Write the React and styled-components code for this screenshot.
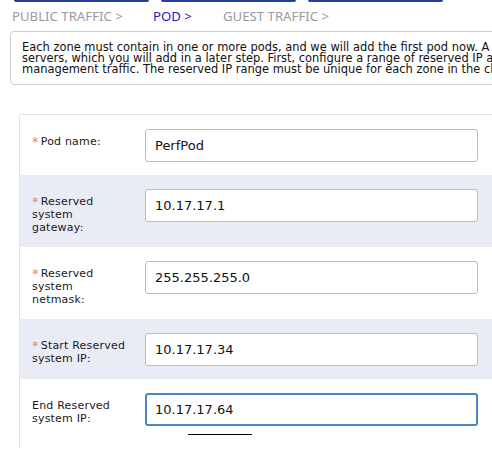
import React from 'react';
import styled, { createGlobalStyle } from 'styled-components';

const GlobalStyle = createGlobalStyle`
  html, body {
    margin: 0;
    padding: 0;
    background: #fff;
    overflow: hidden;
  }
  body {
    font-family: 'DejaVu Sans', sans-serif;
  }
`;

const steps = [
  { label: 'PUBLIC TRAFFIC >', active: false, width: 141 },
  { label: 'POD >', active: true, width: 70 },
  { label: 'GUEST TRAFFIC >', active: false, width: 120 },
];

const fields = [
  { label: 'Pod name:', required: true, value: 'PerfPod' },
  { label: 'Reserved system gateway:', required: true, value: '10.17.17.1', shaded: true },
  { label: 'Reserved system netmask:', required: true, value: '255.255.255.0' },
  { label: 'Start Reserved system IP:', required: true, value: '10.17.17.34', shaded: true },
  { label: 'End Reserved system IP:', required: false, value: '10.17.17.64', focused: true },
];

const App = () => (
  <Page>
    <GlobalStyle />
    <ButtonEdges>
      <ButtonEdge />
      <ButtonEdge />
      <ButtonEdge />
    </ButtonEdges>
    <Steps>
      {steps.map((s) => (
        <Step key={s.label} $active={s.active} style={{ width: s.width }}>
          {s.label}
        </Step>
      ))}
    </Steps>
    <Info>
      Each zone must contain in one or more pods, and we will add the first pod now. A pod contains hosts and primary storage
      <br />
      servers, which you will add in a later step. First, configure a range of reserved IP addresses for CloudStack's internal
      <br />
      management traffic. The reserved IP range must be unique for each zone in the cloud.
    </Info>
    <Panel>
      {fields.map((f) => (
        <Row key={f.label} $shaded={f.shaded}>
          <Label>
            {f.required && <Star>*</Star>}
            {f.label}
          </Label>
          <Field>
            <Input defaultValue={f.value} $focused={f.focused} readOnly />
            {f.focused && <Caret />}
          </Field>
        </Row>
      ))}
    </Panel>
  </Page>
);

const Page = styled.div`
  width: 700px;
  height: 449px;
  overflow: hidden;
`;

const ButtonEdges = styled.div`
  display: flex;
  gap: 12px;
  padding-left: 14px;
  height: 3px;
`;

const ButtonEdge = styled.div`
  width: 135px;
  height: 2px;
  background: #23409c;
  border-radius: 0 0 2px 2px;
`;

const Steps = styled.div`
  display: flex;
  padding-left: 12px;
  height: 25px;
  padding-bottom: 3px;
  align-items: center;
`;

const Step = styled.div`
  font-family: 'Noto Sans', sans-serif;
  font-size: 13.2px;
  color: ${(p) => (p.$active ? '#1a1ec4' : '#9a9a9a')};
  white-space: nowrap;
`;

const Info = styled.div`
  margin-left: 10px;
  width: 640px;
  box-sizing: border-box;
  border: 1px solid #cfcfcf;
  border-radius: 4px;
  padding: 10px 11px 9px;
  font-size: 11.45px;
  line-height: 11px;
  color: #111;
  white-space: nowrap;
  overflow: hidden;
`;

const Panel = styled.div`
  margin: 29px 0 0 19px;
  width: 680px;
  border: 1px solid #e2e2e2;
  border-right: none;
  border-bottom: none;
  border-radius: 3px 0 0 0;
`;

const Row = styled.div`
  display: flex;
  align-items: flex-start;
  padding: 14px 0 13px 12px;
  background: ${(p) => (p.$shaded ? '#e9ecf4' : '#fff')};
`;

const Label = styled.div`
  width: 113px;
  margin-top: 6px;
  padding-right: 19px;
  box-sizing: border-box;
  font-size: 11px;
  line-height: 13px;
  color: #1a1a1a;
  letter-spacing: 0.2px;
`;

const Star = styled.span`
  display: inline-block;
  height: 13px;
  line-height: 13px;
  vertical-align: top;
  color: #e58585;
  font-size: 13px;
  margin-right: 2px;
`;

const Field = styled.div`
  display: flex;
  flex-direction: column;
`;

const Input = styled.input`
  width: 333px;
  height: 33px;
  box-sizing: border-box;
  border: ${(p) => (p.$focused ? '2px solid #4a86c6' : '1px solid #bcbcbc')};
  border-radius: 3px;
  padding: 0 ${(p) => (p.$focused ? '8px' : '9px')};
  font-family: 'DejaVu Sans', sans-serif;
  font-size: 13px;
  color: #111;
  background: #fff;
  outline: none;
`;

const Caret = styled.div`
  width: 64px;
  height: 1px;
  background: #000;
  margin: 8px 0 0 43px;
`;

export default App;
